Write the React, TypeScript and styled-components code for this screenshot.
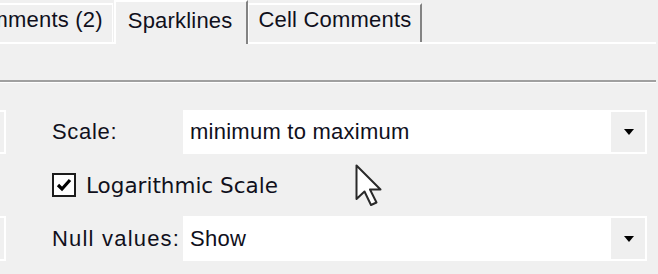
import React from "react"
import styled, { createGlobalStyle } from "styled-components"

const GlobalStyle = createGlobalStyle`
  html, body {
    margin: 0;
    padding: 0;
    background: #f0f0f0;
  }
`

const Frame = styled.div`
  position: relative;
  width: 658px;
  height: 274px;
  overflow: hidden;
  background: #f0f0f0;
  color: #10101c;
  font-family: "Liberation Sans", Arial, sans-serif;
  font-size: 22px;
`

const TabStrip = styled.div`
  display: flex;
  align-items: flex-end;
  height: 42px;
  position: relative;
  z-index: 1;
`

type TabProps = {
  $active?: boolean
  $first?: boolean
}

const Tab = styled.div<TabProps>`
  box-sizing: border-box;
  display: flex;
  align-items: flex-start;
  white-space: nowrap;
  letter-spacing: 0.2px;
  background: #f0f0f0;
  border-top: 2px solid #fff;
  height: ${(p) => (p.$active ? "44px" : "39px")};
  margin-bottom: ${(p) => (p.$active ? "-2px" : "0")};
  padding: ${(p) => (p.$active ? "6px 14px 0 12px" : "2px 9px 0 9px")};
  border-left: ${(p) => (p.$first ? "none" : p.$active ? "2px solid #fff" : "1px solid #fff")};
  border-right: ${(p) => (p.$first ? "1px solid #fff" : "2px solid #838383")};
  margin-left: ${(p) => (p.$first ? "-48px" : "0")};
  margin-right: ${(p) => (p.$first ? "1px" : "0")};
`

const Panel = styled.div`
  width: 656px;
  border-top: 2px solid #fff;
  padding-top: 36px;
`

const Separator = styled.div`
  border-top: 2px solid #a0a0a0;
  border-bottom: 1px solid #fff;
`

const Form = styled.div`
  display: grid;
  grid-template-columns: 6px 46px 131px 464px;
  grid-template-rows: 44px 62px 45px;
  align-items: center;
  margin-top: 27px;
`

const Stub = styled.div`
  grid-column: 1;
  box-sizing: border-box;
  height: 100%;
  border: 2px solid #fff;
  margin-left: -10px;
`

const Label = styled.div<{ $spacing: number }>`
  grid-column: 3;
  letter-spacing: ${(p) => p.$spacing}px;
  white-space: nowrap;
`

const Combo = styled.div`
  grid-column: 4;
  box-sizing: border-box;
  height: 100%;
  background: #fff;
  display: flex;
  align-items: center;
  padding: 2px;
`

const ComboText = styled.div`
  flex: 1;
  padding-left: 5px;
  letter-spacing: 0.25px;
`

const DropButton = styled.div`
  width: 34px;
  align-self: stretch;
  background: #efefef;
  display: flex;
  align-items: center;
  justify-content: center;
`

const Arrow = styled.div`
  width: 0;
  height: 0;
  border-left: 5px solid transparent;
  border-right: 5px solid transparent;
  border-top: 6px solid #000;
  margin-left: 2px;
`

const CheckRow = styled.label`
  grid-column: 3 / span 2;
  display: flex;
  align-items: center;
  gap: 10px;
  font-family: "DejaVu Sans", Verdana, sans-serif;
  font-size: 21.5px;
`

const CheckBox = styled.span`
  box-sizing: border-box;
  width: 24px;
  height: 24px;
  border: 2px solid #1c1c1c;
  background: #fff;
  display: flex;
  align-items: center;
  justify-content: center;
`

const Cursor = styled.svg`
  position: absolute;
  left: 355px;
  top: 164px;
`

const ComboField: React.FC<{ value: string }> = ({ value }) => (
  <Combo>
    <ComboText>{value}</ComboText>
    <DropButton>
      <Arrow />
    </DropButton>
  </Combo>
)

export default function App() {
  return (
    <Frame>
      <GlobalStyle />
      <TabStrip>
        <Tab $first>Comments (2)</Tab>
        <Tab $active>Sparklines</Tab>
        <Tab>Cell Comments</Tab>
      </TabStrip>
      <Panel>
        <Separator />
        <Form>
          <Stub />
          <Label $spacing={0.7}>Scale:</Label>
          <ComboField value="minimum to maximum" />

          <CheckRow>
            <CheckBox>
              <svg width="16" height="14" viewBox="0 0 16 14">
                <path d="M2 7 L6 11 L14 2" fill="none" stroke="#000" strokeWidth="3.2" />
              </svg>
            </CheckBox>
            Logarithmic Scale
          </CheckRow>

          <Stub />
          <Label $spacing={1.2}>Null values:</Label>
          <ComboField value="Show" />
        </Form>
      </Panel>
      <Cursor width="30" height="44" viewBox="0 0 30 44">
        <path
          d="M1.5 1.5 L1.5 35 L9.5 27.5 L16 41 L21.5 38.5 L15 25.5 L25.5 25.5 Z"
          fill="#fff"
          stroke="#2a2a2a"
          strokeWidth="2"
          strokeLinejoin="round"
        />
      </Cursor>
    </Frame>
  )
}
